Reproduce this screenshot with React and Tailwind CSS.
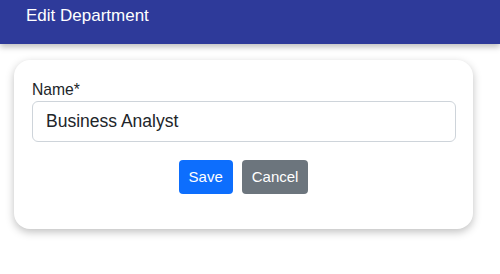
export default function App() {
  return (
    <div className="min-h-[274px] w-[500px] bg-white font-['Liberation_Sans',Arial,sans-serif]">
      {/* Header */}
      <header className="h-[44px] bg-[#2e3a9a] pl-[26px] pt-[4px] text-[17px] leading-[24px] text-white shadow-[0_3px_6px_rgba(0,0,0,0.25)]">
        Edit Department
      </header>

      {/* Card */}
      <div className="px-[14px] pt-[16px]">
        <div className="w-[459px] rounded-[16px] bg-white px-[18px] pb-[35px] pt-[18px] shadow-[0_3px_8px_rgba(0,0,0,0.25)]">
          <label className="mb-[-1px] block text-[15.7px] leading-[24px] text-[#212529]">Name*</label>
          <input
            type="text"
            defaultValue="Business Analyst"
            className="block h-[41px] w-[424px] rounded-[6px] border border-[#ced4da] px-[13px] text-[17.5px] text-[#212529] outline-none"
          />
          <div className="mt-[18px] flex justify-center gap-[9px]">
            <button className="h-[34px] rounded-[4px] bg-[#0d6efd] px-[10px] text-[15px] text-white">
              Save
            </button>
            <button className="h-[34px] rounded-[4px] bg-[#6c757d] px-[10px] text-[15px] text-white">
              Cancel
            </button>
          </div>
        </div>
      </div>
    </div>
  );
}
